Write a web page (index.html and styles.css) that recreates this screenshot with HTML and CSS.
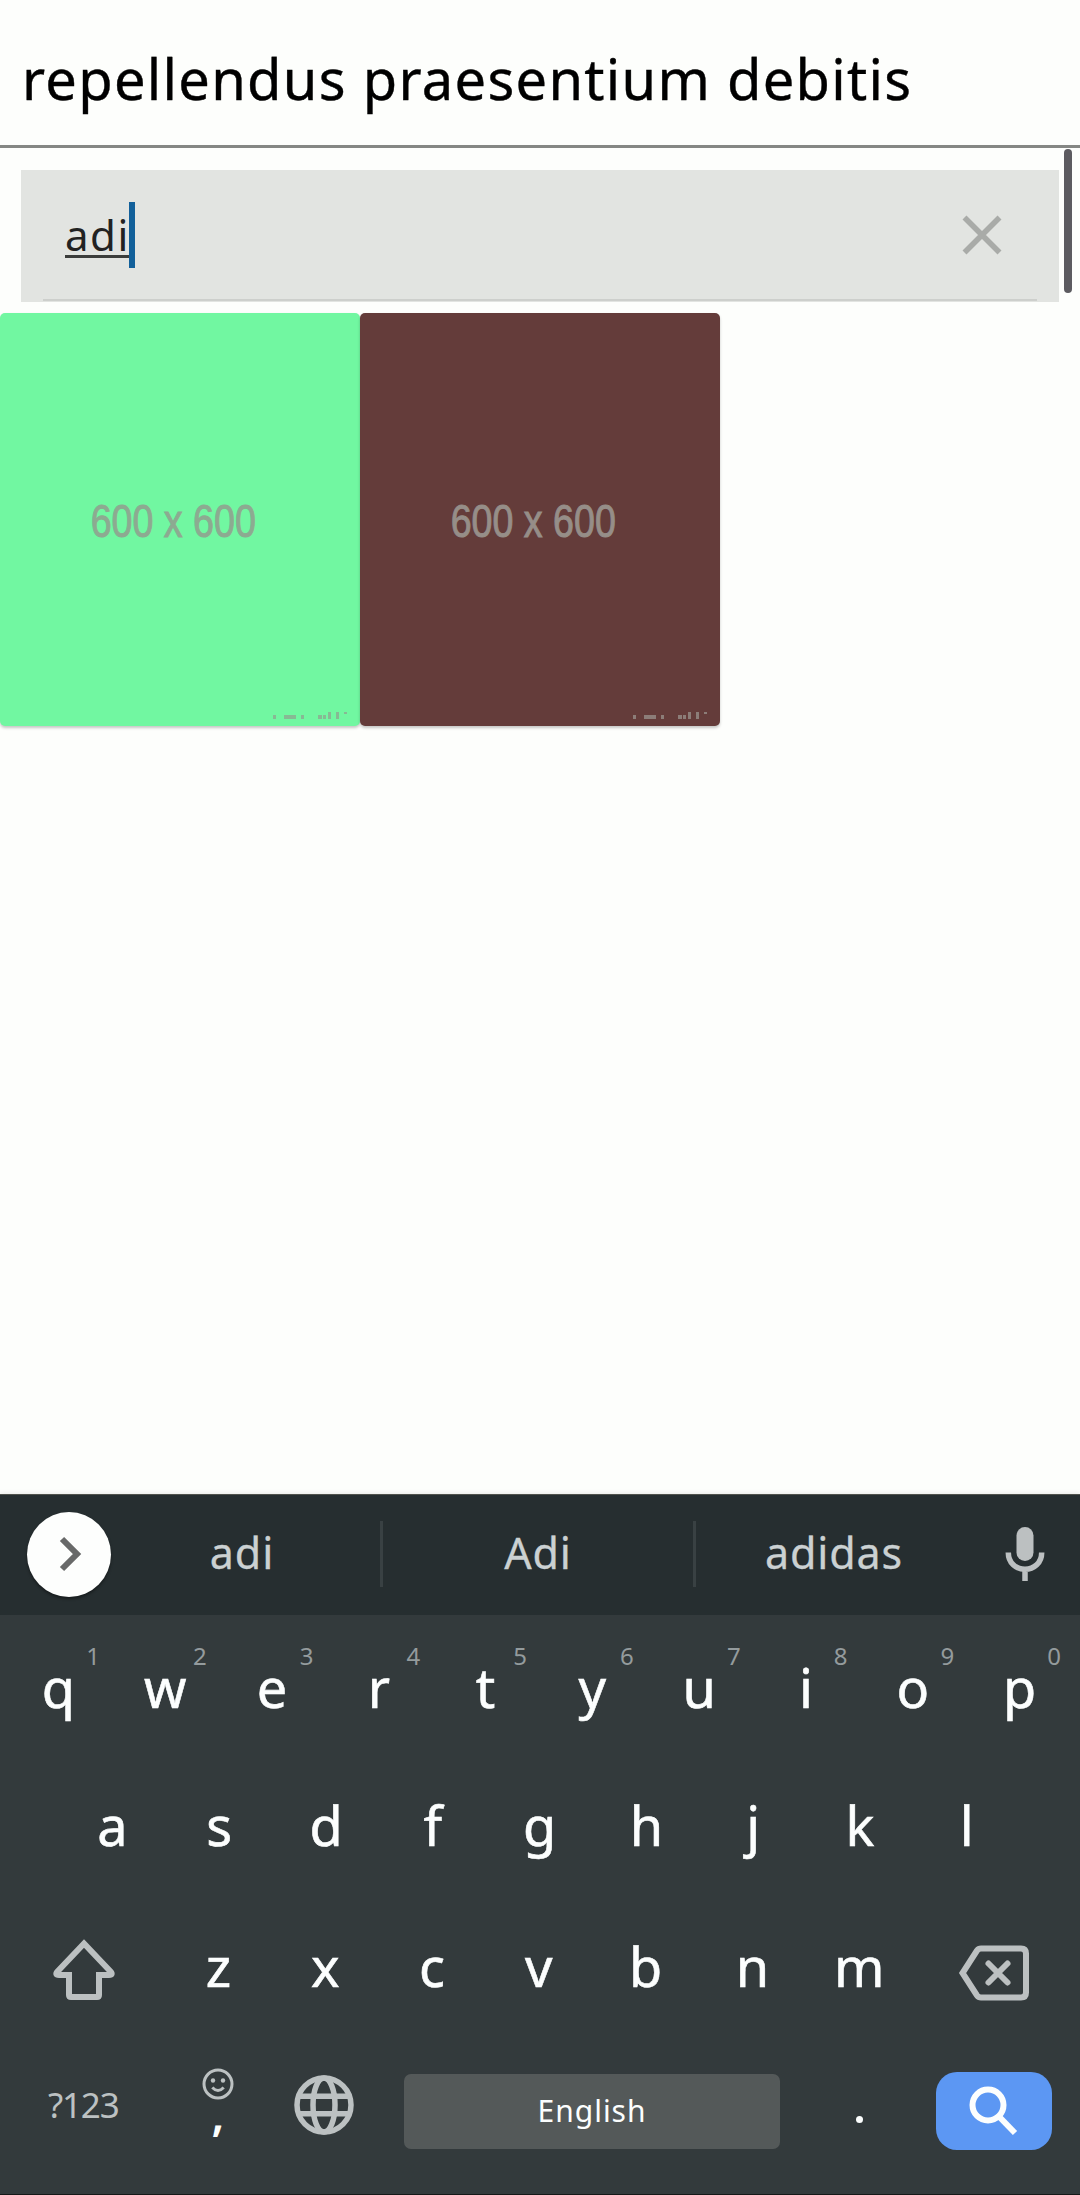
FILE: index.html
```html
<!DOCTYPE html>
<html lang="en">
<head>
<meta charset="utf-8">
<title>Search</title>
<link rel="stylesheet" href="styles.css">
</head>
<body>
<header class="header"><h1 class="title">repellendus praesentium debitis</h1></header>
<main class="content">
  <div class="search">
    <span class="query">adi</span><span class="caret"></span>
    <svg class="clear" viewBox="0 0 40 40"><path d="M2.5 2.5 37.5 37.5M37.5 2.5 2.5 37.5"/></svg>
  </div>
  <div class="scrollbar"></div>
  <div class="tiles">
    <div class="tile tile-green"><span class="size">600 x 600</span>
      <svg class="mark" viewBox="0 0 76 10"><path d="M1 4h3v4H1zM12 4h12v4H12zM29 4h3v4h-3zM46 4h4v4h-4zM51 4h3v4h-3zM56 1h3v7h-3zM64 1h3v7h-3zM72 1h3v2h-3z"/></svg></div>
    <div class="tile tile-brown"><span class="size">600 x 600</span>
      <svg class="mark" viewBox="0 0 76 10"><path d="M1 4h3v4H1zM12 4h12v4H12zM29 4h3v4h-3zM46 4h4v4h-4zM51 4h3v4h-3zM56 1h3v7h-3zM64 1h3v7h-3zM72 1h3v2h-3z"/></svg></div>
  </div>
</main>
<section class="keyboard">
  <div class="suggestions">
    <div class="expand"><svg viewBox="0 0 24 36"><path d="M4 3 19 18 4 33"/></svg></div>
    <span class="word first">adi</span><i class="divider"></i>
    <span class="word second">Adi</span><i class="divider"></i>
    <span class="word third">adidas</span>
    <svg class="mic" viewBox="0 0 40 54"><rect x="11.5" y="0" width="17" height="34" rx="8.5"/><path d="M3.3 25.500C3.300 36 11 42.300 20 42.300S36.700 36 36.700 25.500M20 42v12"/></svg>
  </div>
  <div class="row row-one">
    <span class="key">q<sup>1</sup></span><span class="key">w<sup>2</sup></span><span class="key">e<sup>3</sup></span><span class="key">r<sup>4</sup></span><span class="key">t<sup>5</sup></span><span class="key">y<sup>6</sup></span><span class="key">u<sup>7</sup></span><span class="key">i<sup>8</sup></span><span class="key">o<sup>9</sup></span><span class="key">p<sup>0</sup></span>
  </div>
  <div class="row row-two">
    <span class="key">a</span><span class="key">s</span><span class="key">d</span><span class="key">f</span><span class="key">g</span><span class="key">h</span><span class="key">j</span><span class="key">k</span><span class="key">l</span>
  </div>
  <div class="row row-three">
    <span class="wide shift"><svg width="64" height="62" viewBox="0 0 64 62"><path d="M32 4.500 58.500 32.500Q61.500 36 57 36H47V56Q47 58 45 58H19Q17 58 17 56V36H7Q2.500 36 5.500 32.500Z"/></svg></span>
    <span class="key">z</span><span class="key">x</span><span class="key">c</span><span class="key">v</span><span class="key">b</span><span class="key">n</span><span class="key">m</span>
    <span class="wide backspace"><svg width="72" height="58" viewBox="0 0 72 58"><path d="M23 4.500H63Q68 4.500 68 9.500V48.500Q68 53.500 63 53.500H23Q20.500 53.500 19 51.500L4.500 29 19 6.500Q20.500 4.500 23 4.500Z"/><path d="M30.500 19.500 49.500 38.500M49.500 19.500 30.500 38.500" stroke-linecap="round"/></svg></span>
  </div>
  <div class="row row-four">
    <span class="symbols">?123</span>
    <span class="emoji"><svg width="32" height="32" viewBox="0 0 32 32"><circle cx="16" cy="16" r="14"/><circle class="dot" cx="11" cy="12.500" r="2.200"/><circle class="dot" cx="21" cy="12.500" r="2.200"/><path d="M10.300 19.500Q16 25.500 21.700 19.500"/></svg><b>,</b></span>
    <span class="globe"><svg width="60" height="60" viewBox="0 0 60 60"><circle cx="30" cy="30" r="27"/><ellipse cx="30" cy="30" rx="11" ry="27"/><path d="M6 21.200H54M6 38.800H54"/></svg></span>
    <span class="space">English</span>
    <span class="period"><i></i></span>
    <span class="go"><svg width="50" height="52" viewBox="0 0 50 52"><circle cx="19" cy="20" r="15.500"/><path d="M30 31.500 46 48"/></svg></span>
  </div>
</section>
</body>
</html>
```

FILE: styles.css
```css
* { box-sizing: border-box; }
body { margin: 0; width: 1080px; height: 2195px; display: flex; flex-direction: column; overflow: hidden; background: #fdfefc; font-family: "Noto Sans", sans-serif; }
svg { display: block; fill: none; }

.header { flex: none; height: 148px; padding: 12px 0 0 22px; border-bottom: 3px solid #858784; }
.title { margin: 0; font-size: 56px; font-weight: 400; line-height: 132px; letter-spacing: 1.3px; color: #000; white-space: nowrap; -webkit-text-stroke: .4px; }

.content { flex: 1; position: relative; }
.search { position: relative; display: flex; align-items: center; height: 132px; margin: 22px 21px 0; padding: 0 57px 3px 44px; background: #e2e4e1; }
.search::after { content: ""; position: absolute; left: 22px; right: 22px; bottom: 1px; height: 2px; background: #cdcfcc; }
.query { width: 65px; height: 47px; margin-top: -1px; border-bottom: 3px solid #3b3d3b; color: #222; font-size: 42px; line-height: 47px; letter-spacing: 1.5px; white-space: nowrap; }
.caret { position: relative; left: -1px; width: 6px; height: 66px; background: #12609a; }
.clear { width: 40px; height: 40px; margin-left: auto; stroke: #a9aba8; stroke-width: 5.6; }
.scrollbar { position: absolute; left: 1064px; top: 1px; width: 8px; height: 144px; border-radius: 4px; background: #5c5b60; }
.tiles { display: grid; grid-template-columns: repeat(3, 360px); margin-top: 11px; }
.tile { position: relative; height: 413px; display: flex; align-items: center; justify-content: center; border-radius: 5px; box-shadow: 0 2px 3px rgba(0,0,0,.22); }
.tile-green { background: #71f7a1; color: #8daa91; fill: #8daa91; }
.tile-brown { background: #643c3a; color: #968e88; fill: #968e88; }
.size { margin: 2px 13px 0 0; font: 47px/50px "Liberation Sans", sans-serif; white-space: nowrap; transform: scaleX(.8); -webkit-text-stroke: 1px; }
.mark { position: absolute; right: 12px; bottom: 5px; width: 76px; height: 10px; fill: inherit; opacity: .8; }

.keyboard { flex: none; height: 701px; background: #333a3c; border-bottom: 1px solid #151818; box-shadow: 0 -1px 5px rgba(0,0,0,.08); }
.suggestions { display: flex; align-items: center; height: 121px; padding: 0 34px 2px 27px; background: #262e30; border-top: 1px solid #50534d; color: #cbd1d2; font-size: 43px; }
.expand { display: flex; align-items: center; justify-content: center; width: 84px; height: 85px; border-radius: 50%; background: #fdfefd; box-shadow: 0 2px 3px rgba(0,0,0,.4); }
.expand svg { width: 24px; height: 36px; margin-left: 2px; stroke: #686969; stroke-width: 6; }
.word { text-align: center; line-height: 60px; padding-bottom: 2px; letter-spacing: .9px; -webkit-text-stroke: .3px; }
.first { width: 269px; padding-right: 7px; }
.second { width: 310px; }
.third { width: 276px; }
.divider { width: 3px; height: 66px; background: #394143; }
.mic { width: 40px; height: 54px; margin-left: 33px; fill: #bcc0c1; }
.mic path { fill: none; stroke: #bcc0c1; stroke-width: 5.5; }

.row { display: flex; align-items: center; color: #fcfefe; font-size: 54px; }
.row-one { height: 136px; padding-left: 5px; }
.row-two { height: 143px; padding-left: 59px; }
.row-three { height: 138px; padding-left: 5px; }
.row-four { height: 162px; padding: 0 28px 4px 5px; }
.key { position: relative; width: 106.8px; text-align: center; line-height: 80px; padding-top: 5px; -webkit-text-stroke: .6px; }
.row-one .key { padding-top: 8px; }
.key sup { position: absolute; left: 78px; top: 5px; width: 20px; font-size: 24px; line-height: 24px; color: #949b9d; -webkit-text-stroke: 0; }
.wide { width: 160px; display: flex; stroke: #bcc0c1; stroke-width: 6; }
.shift { padding: 14px 0 0 47px; }
.backspace { padding: 19px 0 0 45px; }

.symbols { width: 160px; font-size: 35px; line-height: 60px; padding: 0 0 12px 43px; color: #bcc1c2; letter-spacing: -1.2px; }
.emoji { display: flex; flex-direction: column; align-items: center; width: 106px; height: 86px; stroke: #bcc1c2; stroke-width: 3; }
.emoji .dot { fill: #bcc1c2; stroke: none; }
.emoji b { font-size: 46px; font-weight: 600; line-height: 26px; }
.globe { width: 106px; display: flex; justify-content: center; margin-top: -13px; stroke: #bcc1c2; stroke-width: 5.5; }
.space { width: 376px; height: 75px; margin-left: 27px; border-radius: 7px; background: #545959; text-align: center; font-size: 30px; line-height: 73px; letter-spacing: 1px; }
.period { width: 156px; padding: 16px 0 0 76px; }
.period i { display: block; width: 7px; height: 7px; border-radius: 50%; background: #fcfefe; }
.go { display: flex; width: 116px; height: 78px; padding: 13px 0 0 33px; border-radius: 21px; background: #5c97f3; stroke: #fcfefe; stroke-width: 6; }
```
